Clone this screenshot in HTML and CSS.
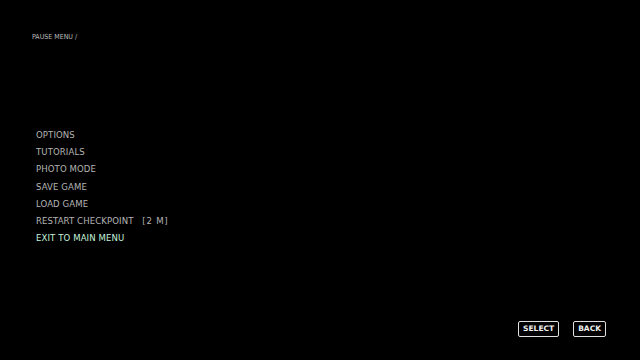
FILE: index.html
```html
<!DOCTYPE html>
<html>
<head>
<meta charset="utf-8">
<link rel="stylesheet" href="styles.css">
</head>
<body>
<div class="screen">
  <div class="crumb">PAUSE MENU /</div>
  <ul class="menu">
    <li>OPTIONS</li>
    <li>TUTORIALS</li>
    <li>PHOTO MODE</li>
    <li>SAVE GAME</li>
    <li>LOAD GAME</li>
    <li>RESTART CHECKPOINT <span class="dist">[2 M]</span></li>
    <li class="active">EXIT TO MAIN MENU</li>
  </ul>
  <div class="prompts">
    <span class="btn">SELECT</span>
    <span class="btn">BACK</span>
  </div>
</div>
</body>
</html>
```
FILE: styles.css
```css
html, body {
  margin: 0;
  padding: 0;
  background: #000;
}
.screen {
  width: 640px;
  height: 360px;
  display: flex;
  flex-direction: column;
  font-family: "DejaVu Sans Condensed", "DejaVu Sans", sans-serif;
  color: #b4b4b4;
}
.crumb {
  margin: 33px 0 0 32px;
  font-size: 7px;
  line-height: 8px;
  color: #bdbdbd;
}
.menu {
  list-style: none;
  margin: 85px 0 0 36px;
  padding: 0;
  font-size: 9.5px;
  letter-spacing: 0.1px;
}
.menu li {
  height: 17.2px;
  line-height: 17.2px;
}
.dist {
  margin-left: 6px;
  letter-spacing: 0.8px;
}
.menu .active {
  color: #c4f2dc;
}
.prompts {
  margin-top: auto;
  margin-bottom: 23px;
  align-self: flex-end;
  margin-right: 34px;
  display: flex;
  gap: 14px;
}
.btn {
  border: 1.5px solid #e0e0e0;
  border-radius: 2px;
  color: #f0f0f0;
  font-family: "DejaVu Sans", sans-serif;
  font-weight: bold;
  font-size: 7.5px;
  line-height: 14.5px;
  padding: 0 4px;
}
```
